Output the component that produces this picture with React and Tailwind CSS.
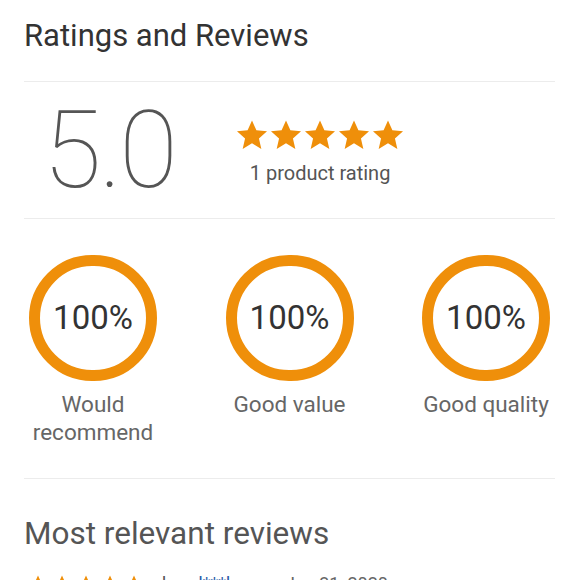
import React from 'react';

const ORANGE = '#ef8f0a';

const Star = ({ size = 32 }) => (
  <svg width={size} height={size} viewBox="0 0 24 24" fill={ORANGE}>
    <path d="M12 1.8l3.1 6.9 7.5.7-5.7 5 1.7 7.4L12 17.9l-6.6 3.9 1.7-7.4-5.7-5 7.5-.7z" />
  </svg>
);

const Ring = ({ value, label }) => (
  <div className="flex w-[130px] flex-col items-center">
    <div className="flex h-[126px] w-[128px] items-center justify-center rounded-full border-[11px] border-[#ef8f0a]">
      <span className="text-[33px] text-[#333]">{value}</span>
    </div>
    <p className="mt-[9px] text-center text-[22.5px] leading-[28px] text-[#666]">{label}</p>
  </div>
);

const App = () => {
  return (
    <div className="h-screen overflow-hidden bg-white px-[24px] font-['Roboto',sans-serif]">
      <h1 className="pt-[16px] text-[31px] leading-[40px] text-[#333]">Ratings and Reviews</h1>

      <div className="mt-[25px] border-t border-[#ececec]" />

      <div className="flex h-[136px] items-center">
        <span className="ml-[19px] text-[107px] font-thin leading-none tracking-tight text-[#555]">5.0</span>
        <div className="ml-[60px] mt-[6px] flex flex-col items-center">
          <div className="flex">
            {[0, 1, 2, 3, 4].map((i) => (
              <Star key={i} size={34} />
            ))}
          </div>
          <span className="mt-[6px] text-[20px] text-[#555]">1 product rating</span>
        </div>
      </div>

      <div className="border-t border-[#ececec]" />

      <div className="flex justify-between px-[4px] pt-[36px] pb-[32px]">
        <Ring value="100%" label={<>Would<br />recommend</>} />
        <Ring value="100%" label="Good value" />
        <Ring value="100%" label="Good quality" />
      </div>

      <div className="border-t border-[#ececec]" />

      <h2 className="mt-[35px] text-[31.5px] leading-[40px] text-[#555]">Most relevant reviews</h2>

      <div className="mt-[16px] flex items-center text-[18px] leading-[27px]">
        <div className="ml-[4px] flex gap-[4px]">
          {[0, 1, 2, 3, 4].map((i) => (
            <Star key={i} size={20} />
          ))}
        </div>
        <span className="ml-[18px] text-[#555]">by</span>
        <span className="ml-[12px] text-[#2a5ca8]">d***k</span>
        <span className="ml-[50px] text-[#666]">Jan 31, 2020</span>
      </div>
    </div>
  );
};

export default App;
